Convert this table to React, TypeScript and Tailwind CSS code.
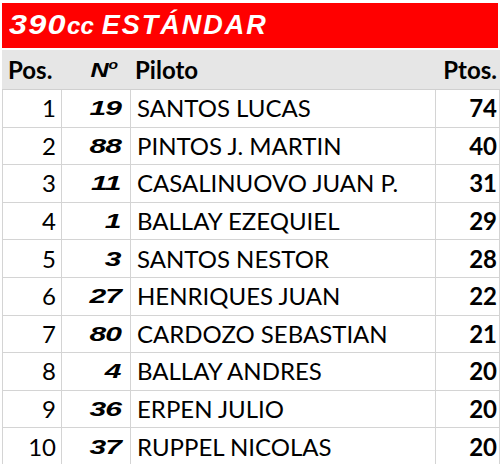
const rows = [
  { pos: 1, num: '19', name: 'SANTOS LUCAS', pts: 74 },
  { pos: 2, num: '88', name: 'PINTOS J. MARTIN', pts: 40 },
  { pos: 3, num: '11', name: 'CASALINUOVO JUAN P.', pts: 31 },
  { pos: 4, num: '1', name: 'BALLAY EZEQUIEL', pts: 29 },
  { pos: 5, num: '3', name: 'SANTOS NESTOR', pts: 28 },
  { pos: 6, num: '27', name: 'HENRIQUES JUAN', pts: 22 },
  { pos: 7, num: '80', name: 'CARDOZO SEBASTIAN', pts: 21 },
  { pos: 8, num: '4', name: 'BALLAY ANDRES', pts: 20 },
  { pos: 9, num: '36', name: 'ERPEN JULIO', pts: 20 },
  { pos: 10, num: '37', name: 'RUPPEL NICOLAS', pts: 20 },
]

const cols = 'grid grid-cols-[59px_69px_305px_64px]'

export default function App() {
  return (
    <div className="w-[500px] h-[464px] bg-white overflow-hidden pl-[2px] pt-[3px] font-['Lato',sans-serif] text-black">
      <div className="h-[45px] w-[496px] bg-[#ff0000] flex items-center pl-[7px]">
        <span className="text-white italic font-black text-[27px] leading-none font-['Liberation_Sans',sans-serif]">
          <span className="inline-block scale-x-[1.2] origin-left tracking-[1px]">390</span>
          <span className="text-[24px] ml-[10px]">cc</span>
          <span className="ml-[8px] tracking-[2px]">ESTÁNDAR</span>
        </span>
      </div>
      <div className={`${cols} h-[40px] mt-[2px] bg-[#e6e6e6] border-b border-[#d0d0d0] items-center text-[24px] font-bold`}>
        <div className="pl-[6px]">Pos.</div>
        <div className="text-right pr-[12px] italic font-black font-['Liberation_Sans',sans-serif] text-[21px]">
          <span className="inline-block scale-x-[1.2] origin-right">
            N<sup className="text-[13px] -top-[0.6em]">o</sup>
          </span>
        </div>
        <div className="pl-[5px]">Piloto</div>
        <div className="text-right pr-[2px]">Ptos.</div>
      </div>
      {rows.map((r) => (
        <div
          key={r.pos}
          className={`${cols} h-[37.6px] border-b border-l border-[#d4d4d4] items-stretch text-[24px] w-[498px]`}
        >
          <div className="border-r border-[#d4d4d4] flex items-center justify-end pr-[5px]">{r.pos}</div>
          <div className="border-r border-[#d4d4d4] flex items-center justify-end pr-[9px] italic font-black font-['Liberation_Sans',sans-serif] text-[20px] tracking-[-0.5px]">
            <span className="inline-block scale-x-[1.5] origin-right">{r.num}</span>
          </div>
          <div className="border-r border-[#d4d4d4] flex items-center pl-[6px]">{r.name}</div>
          <div className="border-r border-[#d4d4d4] flex items-center justify-end pr-[2px] font-bold">{r.pts}</div>
        </div>
      ))}
    </div>
  )
}
